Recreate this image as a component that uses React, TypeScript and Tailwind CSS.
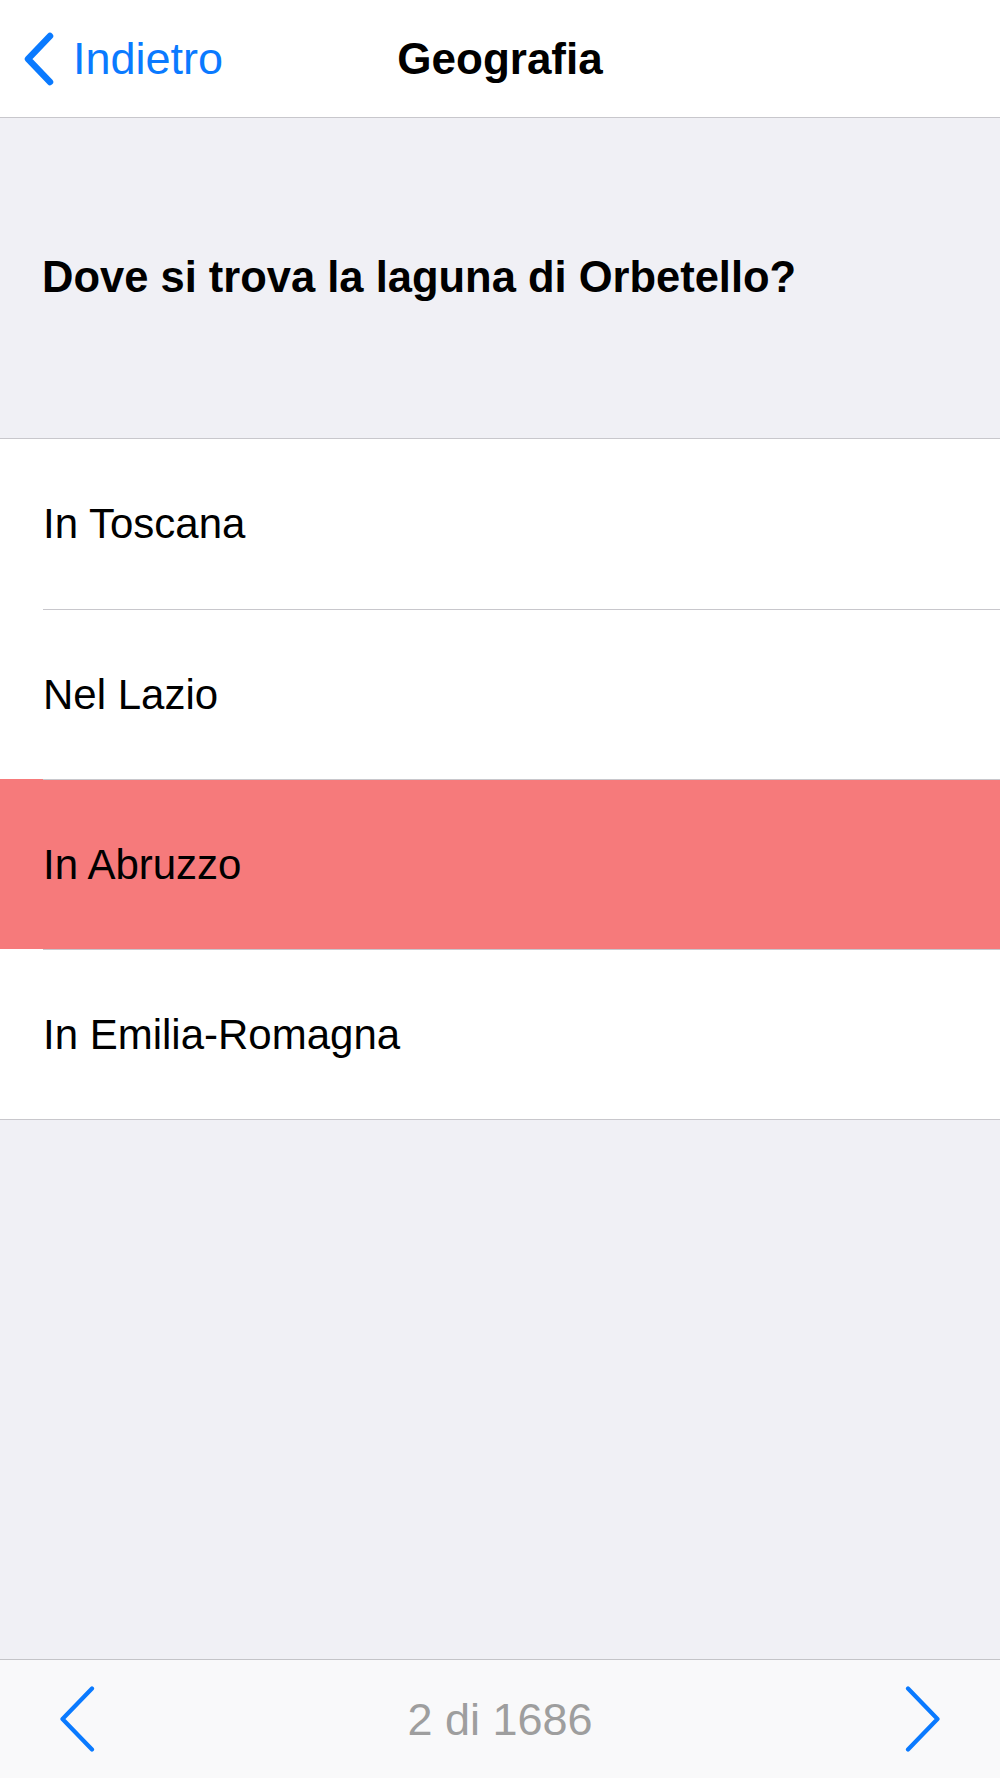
const FONT = "font-['Liberation_Sans',Arial,sans-serif]";

const ANSWERS = [
  { text: "In Toscana", wrong: false },
  { text: "Nel Lazio", wrong: false },
  { text: "In Abruzzo", wrong: true },
  { text: "In Emilia-Romagna", wrong: false },
];

function Chevron({ dir, className }: { dir: "left" | "right"; className?: string }) {
  return (
    <svg viewBox="0 0 36 66" className={className} fill="none">
      <path
        d={dir === "left" ? "M33 2.5 L3.5 33 L33 63.5" : "M3 2.5 L32.5 33 L3 63.5"}
        stroke="#0a7aff"
        strokeWidth="4.2"
        strokeLinecap="round"
        strokeLinejoin="round"
      />
    </svg>
  );
}

export default function App() {
  return (
    <div className={`${FONT} w-[1000px] h-[1778px] flex flex-col bg-[#f0f0f5]`}>
      {/* nav bar */}
      <header className="h-[118px] shrink-0 bg-white border-b border-[#c8c7cc] relative flex items-center">
        <div className="flex items-center pl-[24px] gap-[19px]">
          <svg viewBox="0 0 30 54" className="w-[30px] h-[54px]" fill="none">
            <path
              d="M26 4 L4 27 L26 50"
              stroke="#0a7aff"
              strokeWidth="6.5"
              strokeLinecap="round"
              strokeLinejoin="round"
            />
          </svg>
          <span className="text-[45px] text-[#0a7aff] leading-none">Indietro</span>
        </div>
        <h1 className="absolute left-1/2 -translate-x-1/2 text-[44px] font-bold text-black leading-none">
          Geografia
        </h1>
      </header>

      {/* question */}
      <div className="h-[320px] shrink-0 flex items-center pl-[42px]">
        <h2 className="text-[43.5px] font-bold text-black leading-none">
          Dove si trova la laguna di Orbetello?
        </h2>
      </div>

      {/* answers */}
      <ul className="bg-white border-y border-[#c8c7cc]">
        {ANSWERS.map((a, i) => (
          <li
            key={a.text}
            className={`h-[170px] flex flex-col ${a.wrong ? "bg-[#f67a7b]" : "bg-white"}`}
          >
            {i > 0 && <div className="ml-[43px] h-px bg-[#c8c7cc]" />}
            <div className="flex-1 flex items-center pl-[43px]">
              <span className="text-[42px] text-black leading-none">{a.text}</span>
            </div>
          </li>
        ))}
      </ul>

      <div className="flex-1" />

      {/* toolbar */}
      <footer className="h-[119px] shrink-0 bg-[#f9f9fa] border-t border-[#c4c4c8] flex items-center justify-between px-[59px]">
        <Chevron dir="left" className="w-[36px] h-[66px]" />
        <span className="text-[45px] text-[#9e9e9e] leading-none">2 di 1686</span>
        <Chevron dir="right" className="w-[36px] h-[66px]" />
      </footer>
    </div>
  );
}
